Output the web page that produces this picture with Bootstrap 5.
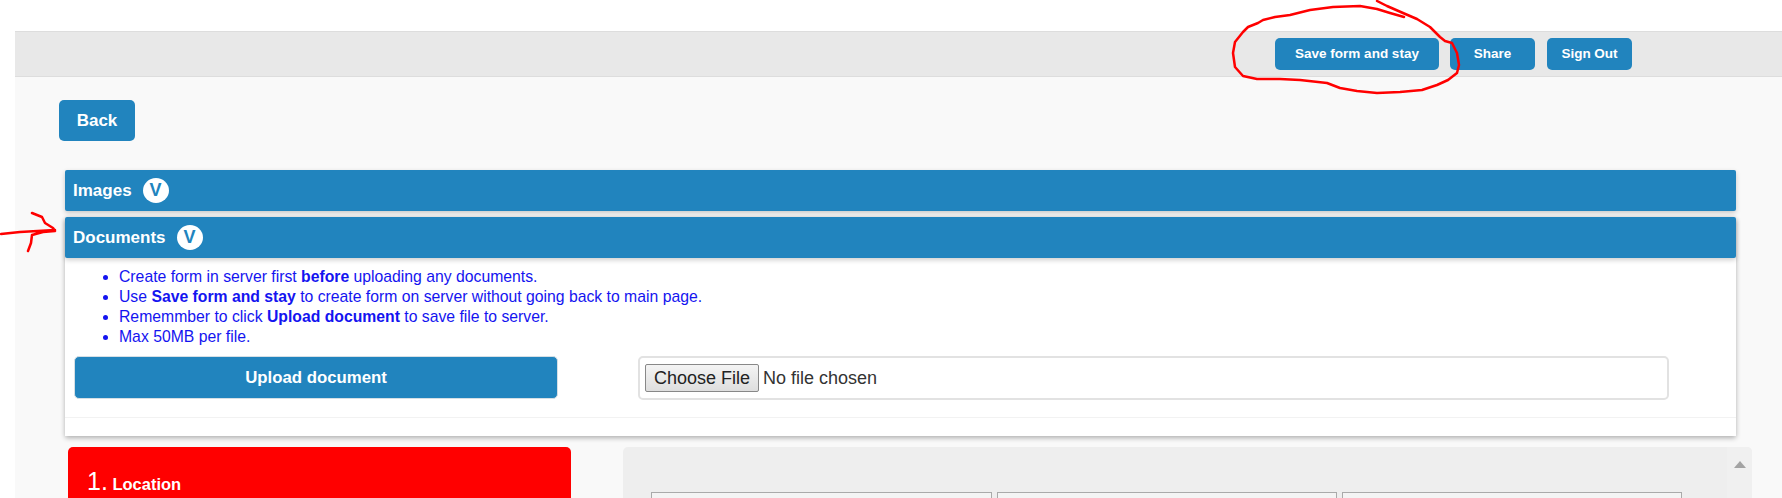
<!DOCTYPE html>
<html lang="en">
<head>
    <meta charset="UTF-8">
    <meta name="viewport" content="width=device-width, initial-scale=1.0">
    <title>Documents</title>
    <link href="https://cdn.jsdelivr.net/npm/bootstrap@5.3.0/dist/css/bootstrap.min.css" rel="stylesheet">
    <style>
        html, body { height: 498px; overflow: hidden; }
        body { background: #fff; font-family: "Liberation Sans", Arial, sans-serif; padding: 31px 0 0 15px; position: relative; }
        .page-wrap { background: #f9f9f9; height: 467px; overflow: hidden; }
        .top-bar { background: #e8e8e8; border-top: 1px solid #ddd; border-bottom: 1px solid #ddd; height: 46px; padding: 6px 150px 0 0; }
        .btn-blue { background: #2184be; border: 0; color: #fff; font-weight: 700; border-radius: 5px; padding: 0; }
        .btn-blue:hover { background: #2184be; color: #fff; }
        .btn-top { height: 32px; font-size: 13.5px; width: 85px; }
        .btn-save { width: 164px; margin-right: 11px; }
        .btn-share { margin-right: 12px; }
        .btn-back { display: block; width: 76px; height: 41px; font-size: 17px; margin: 23px 0 29px 44px; }
        .panel-wrap { margin: 0 46px 0 50px; }
        .panel-head { background: #2184be; color: #fff; height: 41px; border-radius: 2px; padding-left: 8px; font-size: 17px; font-weight: 700; box-shadow: 0 2px 5px rgba(0,0,0,.2); }
        .v-dot { width: 26px; height: 25px; border-radius: 50%; background: #fff; color: #2184be; font-size: 18px; margin-left: 11px; }
        .panel-images { margin-bottom: 6px; }
        .doc-card { border: 0; border-radius: 2px; box-shadow: 0 2px 5px rgba(0,0,0,.3); }
        .doc-body { padding: 9px 10px 0; height: 159px; }
        .doc-list { color: #1414f0; font-size: 15.75px; line-height: 20px; padding-left: 44px; margin-bottom: 10px; }
        .btn-upload { width: 484px; height: 43px; margin: -1px -1px 0 -1px; font-size: 16.8px; border: 1px solid #d5dfe5; flex-shrink: 0; }
        .file-box { width: 1031px; height: 44px; margin: -1px 0 0 81px; border: 2px solid #e2e2e2; border-radius: 5px; padding: 6px 5px; background: #fff; }
        .file-box input { font-size: 18px; color: #333; width: 100%; display: block; }
        .file-box input::file-selector-button { height: 28px; width: 114px; margin-right: 4px; padding: 0 0 3px; font-size: 18px; color: #222; background: linear-gradient(#f4f4f4, #dedede); border: 1px solid #888; border-radius: 2px; }
        .doc-foot { height: 19px; border-top: 1px solid #f2f2f2; background: #fff; }
        .lower-row { margin: 11px 0 0 53px; }
        .step-box { background: #f00; color: #fff; width: 503px; height: 80px; border-radius: 5px; padding: 16px 19px; font-weight: 700; font-size: 16.5px; flex-shrink: 0; }
        .step-box span { font-size: 25px; font-weight: 400; }
        .grey-panel { background: #eee; width: 1129px; height: 80px; margin-left: 52px; border-radius: 5px; padding-left: 28px; }
        .cell-grid { display: grid; grid-template-columns: 341px 340px 340px; gap: 5px; margin-top: 45px; }
        .cell-item { height: 30px; border: 1px solid #aaa; background: #f4f4f4; }
        .scroll-col { width: 25px; margin-left: auto; padding: 14px 0 0 7px; background: #f0f0f0; border-radius: 0 5px 0 0; }
        .scroll-arrow { width: 0; height: 0; border-left: 6px solid transparent; border-right: 6px solid transparent; border-bottom: 7px solid #a3a3a3; }
        .mark-layer { position: absolute; left: 0; top: 0; pointer-events: none; }
    </style>
</head>
<body>
    <div class="page-wrap">
        <div class="top-bar d-flex justify-content-end align-items-start">
            <button class="btn btn-blue btn-top btn-save">Save form and stay</button>
            <button class="btn btn-blue btn-top btn-share">Share</button>
            <button class="btn btn-blue btn-top">Sign Out</button>
        </div>

        <button class="btn btn-blue btn-back">Back</button>

        <div class="panel-wrap">
            <div class="panel-head panel-images d-flex align-items-center">
                Images <span class="v-dot d-flex align-items-center justify-content-center">V</span>
            </div>
            <div class="card doc-card">
                <div class="panel-head d-flex align-items-center">
                    Documents <span class="v-dot d-flex align-items-center justify-content-center">V</span>
                </div>
                <div class="doc-body">
                    <ul class="doc-list">
                        <li>Create form in server first <b>before</b> uploading any documents.</li>
                        <li>Use <b>Save form and stay</b> to create form on server without going back to main page.</li>
                        <li>Rememmber to click <b>Upload document</b> to save file to server.</li>
                        <li>Max 50MB per file.</li>
                    </ul>
                    <div class="d-flex align-items-start">
                        <button class="btn btn-blue btn-upload">Upload document</button>
                        <div class="file-box"><input type="file"></div>
                    </div>
                </div>
                <div class="doc-foot"></div>
            </div>
        </div>

        <div class="lower-row d-flex">
            <div class="step-box"><span>1.</span> Location</div>
            <div class="grey-panel d-flex">
                <div class="cell-grid">
                    <div class="cell-item"></div>
                    <div class="cell-item"></div>
                    <div class="cell-item"></div>
                </div>
                <div class="scroll-col"><div class="scroll-arrow"></div></div>
            </div>
        </div>
    </div>

    <!-- hand drawn red marks on top of the screenshot -->
    <svg class="mark-layer" width="1782" height="498" viewBox="0 0 1782 498" fill="none" stroke="#f00" stroke-width="2.5" stroke-linejoin="round" stroke-linecap="round">
        <path d="M1377 1L1387 6L1403 13L1417 19L1430 27L1440 37L1445 41L1452 43L1457 53L1459 65L1457 73L1448 80L1437 85L1422 90L1400 92L1377 93L1357 91L1340 88L1327 83L1300 80L1280 79L1257 79L1243 76L1235 67L1233 53L1235 42L1243 32L1248 27L1258 23L1263 20L1275 17L1290 15L1310 10L1333 7L1360 6L1377 9L1390 13L1404 17"/>
        <path d="M1 234L20 232L55 230M32 213L42 217L45 223L53 228L55 231L43 232L32 235L31 243L28 251"/>
    </svg>
</body>
</html>
